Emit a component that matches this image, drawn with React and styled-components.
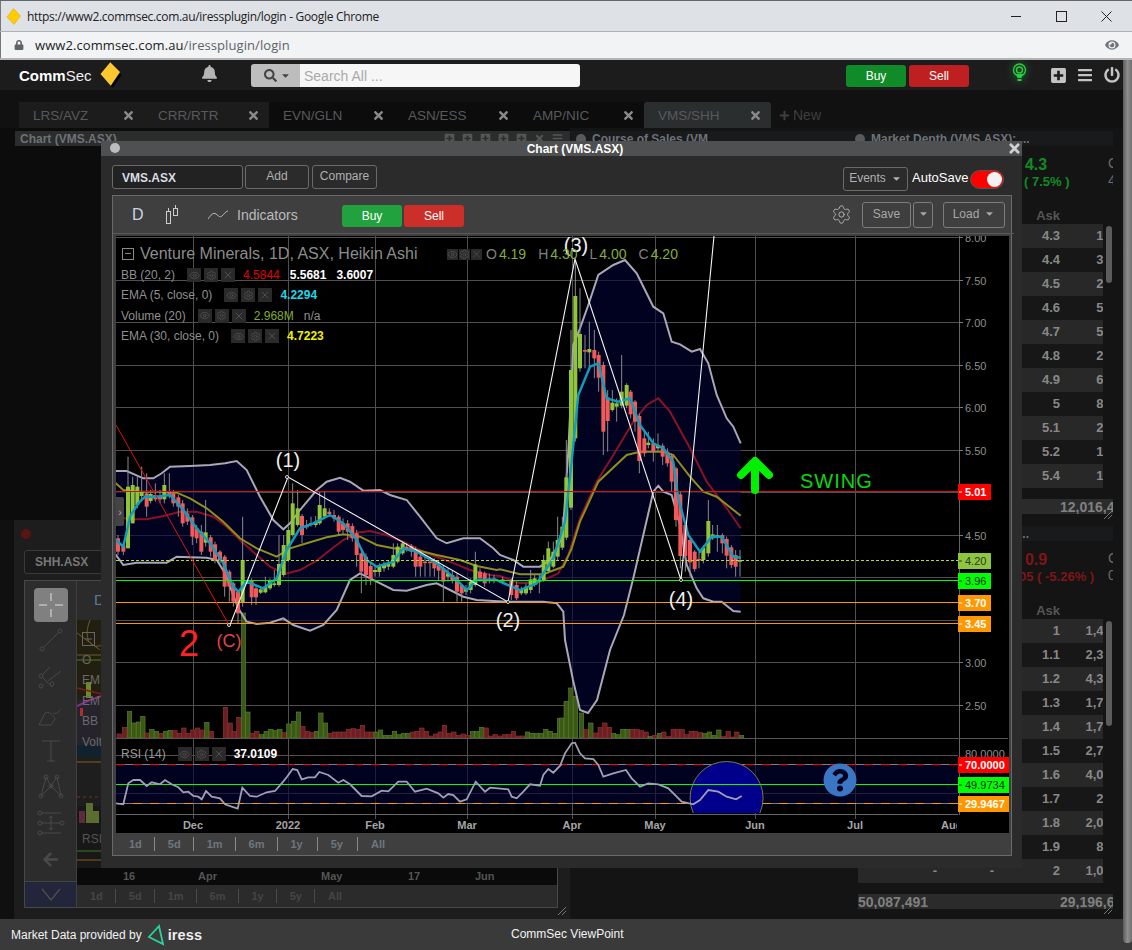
import React from 'react';
import styled, { createGlobalStyle } from 'styled-components';
import { FaBell, FaSearch, FaCaretDown, FaPlusSquare, FaBars, FaPowerOff, FaTimes, FaEye, FaPlus, FaLock, FaQuestionCircle, FaArrowLeft } from 'react-icons/fa';
import { Settings, Eye, X as XIcon } from 'lucide-react';

const Global = createGlobalStyle`
  html, body { margin: 0; padding: 0; background: #111; width: 1132px; height: 950px; overflow: hidden; }
  body, button, input { font-family: "Liberation Sans", Arial, sans-serif; }
  * { box-sizing: border-box; }
`;

const Page = styled.div`
  position: relative; width: 1132px; height: 950px; overflow: hidden;
  display: flex; flex-direction: column; background: #0e0e0e;
`;

/* ---------- browser chrome ---------- */
const TitleBar = styled.div`
  height: 32px; background: #dee1e6; border-top: 1px solid #62666a; border-bottom: 1px solid #aeb1b5;
  display: flex; align-items: center; padding-left: 6px; box-shadow: inset 1px 0 0 #777;
  color: #222; font: 12px "Open Sans", sans-serif;
`;
const TitleText = styled.span` margin-left: 6px; white-space: nowrap; letter-spacing: -.31px; `;
const WinControls = styled.div` margin-left: auto; display: flex; padding-right: 3px; `;
const WinBtn = styled.div`
  width: 45px; height: 30px; display: flex; align-items: center; justify-content: center;
`;
const AddressBar = styled.div`
  height: 28px; background: #f1f3f4; border-bottom: 2px solid #b4b4b4; box-shadow: inset 1px 0 0 #777;
  display: flex; align-items: center; padding: 0 12px 0 14px; font: 13px "Open Sans", sans-serif; color: #222;
`;
const UrlPath = styled.span` color: #5f6368; `;
const Url = styled.span` margin-left: 11px; white-space: nowrap; letter-spacing: .08px; `;
const EyeWrap = styled.div` margin-left: auto; color: #707478; display: flex; padding-right: 1px;`;

/* ---------- app header ---------- */
const AppHeader = styled.div`
  height: 30px; background: #1c1c1d; display: flex; align-items: center; position: relative;
`;
const Logo = styled.div`
  margin-left: 19px; display: flex; align-items: center; color: #fff; font-size: 15px; width: 103px;
  b { font-weight: 700; } span { color: #eee; }
  svg { margin-left: 8px; }
`;
const BellWrap = styled.div` margin-left: 79px; display: flex; color: #b5b5b5; margin-top: -4px; `;
const Search = styled.div`
  margin-left: 33px; width: 329px; height: 23px; border-radius: 3px; overflow: hidden; display: flex;
`;
const SearchAddon = styled.div`
  width: 49px; background: #bdbdbd; color: #444; display: flex; align-items: center; padding-left: 13px; gap: 3px;
`;
const SearchInput = styled.div`
  flex: 1; background: #f6f6f6; color: #aaa; font-size: 14px; line-height: 25px; padding-left: 4px;
`;
const TradeBtn = styled.div`
  width: ${p => p.$w || 60}px; height: ${p => p.$h || 22}px; border-radius: 3px; background: ${p => p.$bg};
  color: #fff; font-size: 12px; display: flex; align-items: center; justify-content: center;
`;
const BuySell = styled.div` margin-left: 266px; margin-top: 1px; display: flex; gap: 3px; `;
const HeaderIcons = styled.div`
  margin-left: 43px; display: flex; align-items: center; color: #c4c4c4;
`;
const Bulb = styled.div` display: flex; filter: drop-shadow(0 0 4px rgba(40,220,70,.55)); margin-top: -5px; `;
const HeaderIcon = styled.div` display: flex; margin-left: ${p => p.$ml}px; `;

/* ---------- tabs ---------- */
const TabRow = styled.div`
  height: 38px; background: #111; padding: 12px 0 0 19px; display: flex;
`;
const Tab = styled.div`
  width: ${p => p.$w || 125}px; height: 26px; background: ${p => p.$bg}; color: #565a5c; font-size: 13.5px;
  display: flex; align-items: center; padding: 1px 9px 0 14px; justify-content: space-between;
  border-radius: ${p => p.$active ? '3px 3px 0 0' : '0'};
  svg { color: #8a8a8a; }
`;
const NewTab = styled.div`
  margin-left: 8px; color: #3f3f3f; font-size: 14px; display: flex; align-items: center; gap: 3px; height: 26px;
`;

/* ---------- workspace ---------- */
const Workspace = styled.div` flex: 1; display: flex; min-height: 0; background: #101010; `;
const LeftCol = styled.div` width: 570px; display: flex; flex-direction: column; `;
const MidCol = styled.div` width: 280px; background: #141414; padding: 3px 0 0 1px; `;
const RightCol = styled.div` width: 273px; display: flex; flex-direction: column; background: #141414; `;

const PanelTitle = styled.div`
  height: 15px; background: ${p => p.$bg || '#191a1b'}; display: flex; align-items: center; gap: 6px; padding-left: ${p => p.$pl || 5}px;
  color: #6d7278; font-size: 12px; font-weight: 700; white-space: nowrap; overflow: hidden;
  margin-left: ${p => p.$ml || 0}px;
`;
const Dot = styled.span` width: 10px; height: 10px; border-radius: 50%; background: ${p => p.$c || '#5a5a5a'}; flex: none; `;
const TitleIcons = styled.div` margin-left: auto; display: flex; gap: 7px; padding-right: 7px; color: #555; `;

const UpperLeft = styled.div` height: 392px; background: #0c0c0c; padding: 3px 0 0 15px; `;
const LowerLeft = styled.div`
  flex: 1; margin-left: 14px; background: #1d1d1d; padding: 0 12px 0 10px; position: relative;
`;
const LowerTitle = styled.div` height: 27px; display: flex; align-items: center; margin-left: -3px; `;
const SymbolGhost = styled.div`
  width: 245px; height: 24px; margin-top: 3px; border: 1px solid #3a3a3a; border-radius: 3px; background: #1a1a1a;
  color: #777; font-size: 12px; font-weight: 700; line-height: 22px; padding-left: 10px;
`;
const GhostFrame = styled.div`
  margin-top: 6px; height: 328px; border: 1px solid #484848; display: flex; background: #2b2b2b;
`;
const ToolCol = styled.div`
  width: 52px; border-right: 1px solid #3f3f3f; background: #2c2c2c; display: flex; flex-direction: column; align-items: center; padding-top: 7px;
`;
const ToolActive = styled.div`
  width: 34px; height: 34px; border-radius: 4px; background: #808080; display: flex; align-items: center; justify-content: center;
`;
const ToolBtn = styled.div` height: 36.5px; display: flex; align-items: center; justify-content: center; color: #4a4a4a; `;
const ToolChevron = styled.div`
  margin-top: auto; width: 100%; height: 26px; background: #23253a; border-top: 1px solid #444; display: flex; align-items: center; justify-content: center;
`;
const GhostBody = styled.div` flex: 1; display: flex; flex-direction: column; min-width: 0; `;
const GhostToolbar = styled.div` height: 39px; padding-left: 17px; color: #5b7c99; font-size: 15px; line-height: 38px; `;
const GhostPlot = styled.svg` display: block; flex: none; `;
const GhostAxis = styled.div`
  height: 17px; background: #0a0a0a; position: relative; color: #555; font-size: 11px; font-weight: 700; line-height: 17px;
`;
const AxisTick = styled.span` position: absolute; left: ${p => p.$x}px; `;
const GhostRange = styled.div`
  flex: 1; display: flex; align-items: center; padding-left: 0; color: #454545; font-size: 11px; font-weight: 700;
`;
const GhostRangeBtn = styled.span`
  padding: 0 12px 0 13px; height: 14px; line-height: 14px; border-right: ${p => p.$last ? 'none' : '1px solid #4a4a4a'};
`;
const Grip = styled.svg` position: absolute; right: ${p => p.$r}px; bottom: ${p => p.$b}px; `;

/* right depth panels */
const Depth = styled.div`
  height: 395px; position: relative; padding-top: 3px; overflow: hidden;
  width: 263px;
`;
const QuoteRow = styled.div` margin-top: 9px; height: 34px; position: relative; display: flex; padding-left: 151px; width: 263px; overflow: hidden; `;
const QuoteBlock = styled.div`
  width: 70px; display: flex; flex-direction: column; align-items: center; color: ${p => p.$c}; white-space: nowrap; flex: none;
  strong { font-size: 16px; line-height: 20px; } span { font-size: 13px; font-weight: 700; line-height: 14px; margin-left: ${p => p.$ox || 0}px; }
`;
const QuoteSide = styled.div`
  margin-left: 37px; color: #6a6a6a; font-size: 14px; display: flex; flex-direction: column; line-height: 17px; flex: none;
`;
const AskHead = styled.div`
  margin-top: 19px; height: 16px; color: #555; font-size: 13px; font-weight: 700; padding-left: 8px; width: 255px; margin-left: 0;
  display: grid; grid-template-columns: 84px 57px 66px; line-height: 15px;
  span:nth-child(3) { text-align: right; padding-right: 5px; }
`;
const Row = styled.div`
  height: 24px; width: 245px; margin-left: 8px; background: ${p => p.$odd ? '#282828' : '#171717'}; overflow: hidden;
  display: grid; grid-template-columns: 84px 57px 66px 58px; color: #888; font-size: 13px; font-weight: 700; line-height: 24px;
  span { text-align: right; padding-right: 5px; white-space: nowrap; }
`;
const TotalRow = styled.div`
  margin-top: 11px; margin-left: 8px; width: 255px; height: 15px; background: #2b2b2b; overflow: hidden; color: #808080; font-size: 14px; font-weight: 700;
  display: flex; line-height: 16px; white-space: nowrap;
  span:first-child { width: 202px; flex: none; }
`;
const Thumb = styled.div`
  position: absolute; left: 256px; top: 98px; width: 6px; height: ${p => p.$h}px; border-radius: 3px; background: #5c5c5c;
`;

/* page scrollbar */
const PageScroll = styled.div`
  position: absolute; right: 0; top: 60px; width: 9px; height: 883px;
  background: linear-gradient(90deg, #5b5b5b, #8d8d8d 50%, #6f6f6f); border-radius: 0 0 4px 4px;
`;

/* footer */
const Footer = styled.div`
  height: 31px; background: #3a3a3a; color: #f2f2f2; font-size: 12px; display: flex; align-items: center; padding-left: 11px; position: relative;
`;
const Iress = styled.b` font-size: 14.5px; color: #eee; margin-left: 1px; letter-spacing: .1px; `;
const IressMark = styled.svg` display: block; margin-left: 5px; flex: none; `;
const FootRight = styled.span` margin-top: -2px; `;
const FootLeft = styled.div` display: flex; align-items: center; width: 500px; `;

/* ---------- floating chart window ---------- */
const ChartWindow = styled.div`
  position: absolute; left: 101px; top: 141px; width: 921px; height: 727px; background: #2b2b2b;
  display: flex; flex-direction: column;
`;
const WinHead = styled.div`
  height: 15px; background: #4f5051; display: flex; align-items: center; justify-content: center; position: relative; padding-left: 27px;
  color: #fff; font-size: 12px; font-weight: 700; flex: none;
`;
const WinDot = styled.span`
  position: absolute; left: 9px; top: 2px; width: 10px; height: 10px; border-radius: 50%; background: #bdbdbd;
`;
const WinClose = styled.span` position: absolute; right: 0; top: 0; color: #d0d0d0; display: flex; `;
const SymbolRow = styled.div`
  height: 30px; margin-top: 9px; padding: 0 18px 0 11px; display: flex; gap: 2px; flex: none;
`;
const SymbolInput = styled.div`
  width: 131px; height: 24px; border: 1px solid #6a6a6a; border-radius: 3px; background: #222; color: #d8dde2; font-size: 12px; font-weight: 700;
  line-height: 24px; padding-left: 9px;
`;
const GhostBtn = styled.div`
  height: ${p => p.$h || 24}px; width: ${p => p.$w}px; border: 1px solid ${p => p.$bc || '#6a6a6a'}; border-radius: 3px; color: ${p => p.$c || '#b0b0b0'}; font-size: 12px;
  display: flex; align-items: center; justify-content: center; gap: 5px; flex: none; margin-left: ${p => p.$ml || 0}px; margin-top: ${p => p.$mt || 0}px;
  padding-bottom: 2px;
`;
const Spacer = styled.div` flex: 1; `;
const GapBox = styled.span` width: ${p => p.$w}px; flex: none; `;
const AutoSave = styled.div`
  margin-left: 2px; margin-top: 4px; color: #fff; font-size: 13px; line-height: 18px; width: 55px; white-space: nowrap;
`;
const Toggle = styled.div`
  margin-left: 1px; margin-top: 5px; width: 34px; height: 19px; border-radius: 10px; background: #f00; border: 1px solid #555; position: relative;
  &::after { content: ''; position: absolute; right: 1px; top: 1px; width: 15px; height: 15px; border-radius: 50%; background: #f2f2f2; }
`;
const ChartFrame = styled.div`
  margin: 0 10px 0 11px; width: 900px; height: 661px; border: 1px solid #6a6a6a; background: #3f3f3f; display: flex; flex-direction: column; padding-left: 3px; flex: none;
`;
const Toolbar = styled.div`
  height: 38px; display: flex; align-items: center; flex: none; border-bottom: 1px solid #5a5a5a; margin-right: -3px; margin-left: -3px; padding-left: 19px;
`;
const Dee = styled.span` color: #c9d6e2; font-size: 16px; margin-right: 22px; width: 11px; `;
const IndLabel = styled.span` color: #bbb; font-size: 14px; margin-left: 9px; width: 61px; `;
const ToolbarTrade = styled.div` display: flex; gap: 2px; margin-left: 44px; margin-top: 2px; `;
const GearWrap = styled.div` display: flex; color: #bbb; margin-right: 10px; `;
const PlotWrap = styled.div` position: relative; flex: none; width: 893px; height: 597px; background: #000; margin-top: 2px; overflow: hidden;`;
const PlotSvg = styled.svg` display: block; position: absolute; left: 0; top: 0; `;
const RangeBar = styled.div`
  flex: 1; display: flex; align-items: center; color: #6e7680; font-size: 11px; font-weight: 700;
`;
const RangeBtn = styled.span`
  height: 14px; line-height: 14px; padding: ${p => p.$pad || '0 12px 0 13px'}; border-right: ${p => p.$last ? 'none' : '1px solid #8a8a8a'};
`;

/* legend */
const Legend = styled.div`
  position: absolute; left: 5px; top: 10px; display: flex; flex-direction: column; color: #8f8f8f;
`;
const LegendTitle = styled.div` display: flex; align-items: center; height: 16px; margin-bottom: 3px; white-space: nowrap; `;
const MinusBox = styled.span`
  width: 12px; height: 12px; border: 1px solid #8a8a8a; position: relative; flex: none; margin-left: 1px;
  &::after { content: ''; position: absolute; left: 2px; right: 2px; top: 4px; height: 1px; background: #8a8a8a; }
`;
const TitleName = styled.span` font-size: 16px; margin-left: 6px; color: #8c8c8c; width: 307px; `;
const OHLC = styled.span` display: flex; gap: 2px; font-size: 14px; margin-right: 12px; color: #808080; i { font-style: normal; color: #85ad3a; } `;
const LegendRow = styled.div`
  display: flex; align-items: center; height: 20.3px; font-size: 12px; white-space: nowrap;
`;
const IconGroup = styled.span` display: flex; gap: ${p => p.$g ?? 3}px; margin: 0 ${p => p.$mr ?? 8}px 0 ${p => p.$ml ?? 12}px; `;
const IconBox = styled.span`
  width: ${p => p.$s || 14}px; height: ${p => p.$s || 14}px; background: #2a2a2a; color: #4e4e4e; display: flex; align-items: center; justify-content: center;
`;
const Val = styled.span` color: ${p => p.$c}; margin-right: ${p => p.$mr ?? 10}px; font-weight: ${p => p.$w || 700}; `;
const RsiLegend = styled(LegendRow)` position: absolute; left: 5px; top: 508px; color: #9a9a9a; `;
const Handle = styled.div`
  position: absolute; left: 0; top: 261px; width: 8px; height: 29px; background: #444; color: #aaa; font-size: 11px; display: flex; align-items: center; justify-content: center; border-radius: 0 2px 2px 0;
`;
const HelpBadge = styled.div` position: absolute; left: 707px; top: 527px; display: flex; color: #3a76c4; `;

/* ---------- chart data ---------- */
const pts4 = a => a.map(([x, y]) => [110 + x / 3, 440 + y / 3]);
const pts5 = a => a.map(([x, y]) => [500 + x / 3, 235 + y / 3]);
const str = a => a.map(p => p[0].toFixed(1) + ',' + p[1].toFixed(1)).join(' ');

const bbUp = [...pts4([[0,93],[18,93],[50,93],[100,115],[130,115],[155,100],[180,80],[240,78],[300,75],[345,70],[380,63],[410,90],[450,170],[490,240],[520,268],[540,250],[570,210],[620,150],[650,125],[690,113],[720,125],[760,152],[810,150],[840,165],[890,180],[930,230],[980,295],[1010,310],[1060,295],[1110,295],[1150,325]]),
  ...pts5([[0,960],[40,975],[70,995],[120,995],[150,975],[180,920],[190,870],[205,650],[220,330],[240,280],[265,210],[295,120],[340,90],[375,75],[410,115],[460,215],[490,235],[515,320],[540,328],[575,350],[600,342],[625,385],[650,480],[680,550],[700,575],[722,625]])];
const bbLow = [...pts4([[0,345],[18,345],[40,375],[80,368],[130,368],[170,368],[200,350],[240,352],[290,353],[320,360],[345,400],[385,505],[410,545],[440,552],[480,548],[520,535],[550,555],[600,572],[640,555],[680,510],[720,420],[750,400],[800,425],[850,450],[890,452],[950,435],[980,430],[1020,450],[1060,470],[1100,480],[1190,485]]),
  ...pts5([[60,1100],[130,1100],[170,1105],[190,1130]]),
  [565,640],[573,680],[580,710],[588,713],[597,700],[610,650],[624,615],
  ...pts5([[400,1030],[430,900],[460,770],[475,752],[490,770],[515,780],[540,870],[560,990],[590,1060],[610,1090],[640,1100],[665,1100],[700,1128],[722,1130]])];
const olive = [...pts4([[0,125],[18,130],[40,150],[90,155],[150,155],[200,158],[240,175],[290,205],[340,245],[390,295],[440,325],[500,350],[540,325],[590,310],[650,292],[700,283],[750,290],[800,315],[850,325],[920,330],[980,345],[1050,360],[1100,378],[1160,390]]),
  ...pts5([[0,1003],[60,1018],[130,1018],[190,995],[215,940],[240,860],[295,740],[380,660],[420,650],[490,650],[520,660],[570,725],[610,770],[650,785],[722,842]])];
const maroon = [...pts4([[18,230],[60,238],[110,238],[160,228],[210,215],[260,215],[310,230],[350,260],[390,300],[440,345],[480,380],[525,402],[570,390],[620,362],[660,330],[700,300],[740,278],[780,273],[830,285],[880,305],[950,340],[1020,365],[1080,390],[1140,405]]),
  ...pts5([[0,1023],[60,1045],[120,1040],[175,1015],[205,960],[240,850],[290,740],[340,660],[400,560],[440,510],[475,490],[510,530],[570,640],[620,740],[680,820],[722,880]])];
const teal = [...pts4([[18,300],[40,320],[60,230],[85,190],[105,170],[140,170],[180,165],[220,210],[260,265],[300,310],[340,370],[370,440],[385,455],[410,425],[460,445],[500,415],[530,330],[570,265],[610,250],[660,225],[700,250],[740,300],[770,360],[800,380],[850,365],[880,325],[920,335],[980,370],[1040,420],[1070,450],[1100,420],[1160,420]]),
  ...pts5([[0,1040],[60,1065],[110,1045],[160,970],[195,860],[215,680],[235,480],[270,395],[295,385],[320,490],[355,500],[390,490],[420,570],[460,625],[490,640],[520,680],[535,790],[565,900],[600,950],[635,905],[665,905],[700,965],[722,968]])];

// x, bodyTop, bodyBottom, up(1)/down(0), wickTop, wickBottom
const c4 = [[24,295,335,0,285,345],[40,315,335,0,305,345],[54,140,325,1,50,325],[68,135,250,1,110,250],[82,140,195,1,110,205],[95,153,168,1,80,180],[110,160,200,0,100,230],[122,162,183,1,150,190],[136,165,178,0,130,185],[150,168,178,0,150,190],[163,135,178,1,100,190],[178,155,165,0,100,175],[190,160,190,0,150,200],[205,172,200,0,165,230],[218,190,250,0,180,260],[232,220,245,0,205,255],[247,232,290,0,225,315],[260,265,295,0,255,310],[274,275,335,0,255,345],[287,277,308,1,180,320],[302,292,335,0,285,350],[315,313,360,0,305,370],[330,335,360,0,330,370],[344,350,440,0,345,470],[358,395,440,0,390,485],[370,430,485,0,425,500],[384,455,520,0,450,550],[398,360,487,1,230,500],[425,420,472,0,415,495],[438,445,472,0,435,495],[452,448,458,1,440,462],[466,440,457,1,410,460],[480,420,445,1,415,450],[493,430,435,1,390,440],[507,372,435,1,285,440],[521,315,405,1,285,410],[535,270,360,1,260,365],[548,190,285,1,130,290],[563,205,255,1,150,260],[576,228,285,0,222,310],[590,257,262,0,240,268],[603,250,255,1,230,260],[617,245,255,1,228,262],[629,195,250,1,155,255],[644,205,230,1,155,235],[658,215,222,0,205,230],[672,225,235,0,210,245],[686,230,275,0,225,285],[699,250,270,0,235,280],[713,250,275,0,240,300],[727,258,295,0,250,305],[740,280,345,0,270,380],[754,340,395,0,325,460],[768,350,405,0,340,435],[782,378,418,0,365,435],[795,390,396,1,375,410],[808,378,396,1,370,410],[822,375,385,1,365,395],[835,370,380,1,360,390],[850,345,380,1,310,385],[863,320,365,1,310,370],[878,310,340,1,305,345],[890,320,325,0,310,335],[904,318,335,0,312,350],[917,330,380,0,320,410],[931,350,380,0,335,410],[945,365,368,0,345,410],[960,365,368,0,350,410],[973,365,385,0,355,410],[986,375,392,0,360,420],[1000,385,425,0,375,485],[1014,400,410,1,385,425],[1027,405,420,0,390,430],[1041,410,455,0,400,485],[1055,435,460,0,430,485],[1068,445,455,1,435,465],[1082,425,450,1,415,460],[1096,373,435,1,335,440],[1110,395,415,0,385,425],[1124,400,430,0,395,440],[1138,415,420,0,400,430],[1152,415,420,0,405,430]];
const c5 = [[8,1033,1040,0,1025,1048],[34,1035,1080,0,1030,1095],[50,1050,1090,0,1040,1095],[64,1062,1075,1,1055,1080],[78,1055,1075,1,1045,1080],[92,1033,1065,1,1005,1075],[104,1030,1050,1,1020,1055],[118,1035,1040,1,1020,1075],[131,975,1035,1,960,1040],[145,940,1008,1,920,1015],[160,950,995,1,920,1000],[173,915,965,1,845,975],[187,875,938,1,845,945],[199,727,908,1,615,915],[213,405,818,1,285,825],[226,183,610,1,75,620],[240,297,400,1,160,410],[255,345,350,0,300,400],[268,342,352,1,260,400],[283,345,370,0,285,430],[296,360,428,0,350,470],[310,390,590,0,380,660],[323,487,558,0,465,650],[337,503,525,1,465,530],[350,505,515,1,490,560],[365,470,512,1,360,520],[380,450,512,1,445,520],[392,470,538,0,465,550],[405,500,560,0,495,590],[418,543,678,0,535,715],[433,610,655,0,590,665],[445,623,630,1,590,640],[460,625,650,0,610,680],[474,630,640,1,595,650],[488,632,665,0,625,690],[502,650,685,0,640,695],[515,662,740,0,655,770],[528,700,855,0,695,875],[541,778,963,0,770,1000],[556,870,963,0,865,1010],[570,915,982,0,905,1025],[584,950,1002,0,945,1010],[597,972,976,0,950,1000],[610,938,975,1,930,985],[625,858,955,1,795,965],[638,898,910,1,870,915],[652,900,908,1,870,950],[667,900,925,0,895,955],[680,912,962,0,905,1000],[694,937,990,0,930,1000],[707,960,995,0,945,1025],[720,975,980,1,945,1025]];
const candles = [
  ...c4.map(([x, t, b, u, wt, wb]) => ({ x: 110 + x / 3, t: 440 + t / 3, b: 440 + b / 3, u, wt: 440 + wt / 3, wb: 440 + wb / 3 })),
  ...c5.map(([x, t, b, u, wt, wb]) => ({ x: 500 + x / 3, t: 235 + t / 3, b: 235 + b / 3, u, wt: 235 + wt / 3, wb: 235 + wb / 3 })),
];

const vol6 = [[27,12,0],[43,32,0],[58,80,1],[71,45,1],[85,48,1],[98,65,1],[111,15,0],[125,26,1],[139,20,1],[153,14,0],[167,20,1],[180,23,1],[194,22,0],[208,14,0],[221,30,0],[234,14,0],[248,24,0],[262,30,0],[276,24,0],[290,47,1],[304,20,0],[346,92,0],[360,45,0],[372,20,0],[386,62,0],[400,375,1],[413,78,1],[426,14,0],[440,20,0],[454,10,1],[468,20,1],[482,26,1],[496,22,1],[509,26,1],[523,16,0],[536,42,1],[550,50,1],[565,78,1],[578,35,0],[592,20,0],[606,16,0],[620,20,1],[632,75,1],[646,45,1],[660,14,0],[673,18,0],[687,18,0],[701,18,0],[715,26,0],[729,28,0],[743,26,0],[757,38,0],[770,18,0],[784,18,0],[798,18,1],[811,24,1],[825,8,1],[839,8,1],[853,20,1],[866,10,1],[880,14,1],[894,14,1],[908,18,0],[921,20,0],[935,30,0],[949,20,0],[963,6,0],[976,12,0],[990,18,0],[1003,38,0],[1017,14,0],[1031,18,0],[1045,8,0],[1059,12,0],[1073,8,0],[1087,20,1],[1100,20,1],[1114,32,1],[1128,30,0],[1142,6,0],[1155,10,0],[1169,6,0],[1183,10,0],[1197,10,0],[1210,20,0],[1224,6,0],[1238,6,0],[1252,18,1],[1265,14,1],[1279,14,1],[1293,14,1],[1307,26,1],[1320,20,1],[1334,14,1],[1348,58,1]];
const vol7 = [[4,60,1],[18,110,1],[32,150,1],[46,125,1],[64,75,1],[78,25,0],[92,45,1],[106,15,0],[120,32,0],[134,45,0],[148,32,0],[160,14,1],[174,10,1],[188,26,1],[202,26,1],[216,26,0],[230,26,0],[244,22,0],[258,18,0],[270,5,1],[284,8,0],[298,14,1],[311,18,0],[325,4,0],[339,26,0],[352,26,0],[366,26,0],[380,10,0],[393,20,0],[406,20,0],[420,16,0],[434,14,1],[448,18,1],[462,8,1],[476,24,1],[490,4,0],[504,20,0],[518,3,0],[530,18,0],[544,8,1]];
const volumes = [
  ...vol6.map(([x, h, u]) => ({ x: 110 + x / 3, h: h / 3, u })),
  ...vol7.map(([x, h, u]) => ({ x: 560 + x / 3, h: h / 3, u })),
];

const rsi = [...[[18,340],[40,343],[55,280],[70,270],[90,270],[110,288],[125,277],[150,283],[165,270],[185,283],[205,292],[220,307],[235,305],[250,318],[265,320],[275,328],[288,303],[305,320],[330,325],[345,343],[365,350],[383,356],[397,293],[420,318],[440,320],[470,307],[495,303],[515,280],[530,262],[548,237],[562,240],[575,268],[595,262],[615,262],[628,246],[655,255],[685,278],[700,270],[720,283],[755,318],[785,319],[815,302],[835,304],[865,275],[890,275],[915,305],[950,296],[985,310],[1000,323],[1015,312],[1030,315],[1050,335],[1070,328],[1097,275],[1125,305],[1140,293],[1195,298],[1205,320],[1220,325],[1240,305],[1260,283],[1290,287],[1300,255],[1315,237],[1330,248],[1355,222]].map(([x, y]) => [110 + x / 3, 690 + y / 3]),
  ...[[0,228],[15,190],[35,160],[45,158],[60,190],[75,205],[100,207],[115,225],[130,260],[160,250],[198,240],[215,265],[240,290],[265,280],[295,283],[325,295],[365,335],[400,343],[420,330],[445,300],[475,305],[500,320],[528,328],[545,318]].map(([x, y]) => [560 + x / 3, 690 + y / 3])];

const gridX = [193, 288, 375, 467, 572, 655, 755, 855];
const prices = ['8.00', '7.50', '7.00', '6.50', '6.00', '5.50', '4.50', '3.00', '2.50'];
const gridP = [8, 7.5, 7, 6.5, 6, 5.5, 5, 4.5, 4, 3.5, 3, 2.5];
const py = p => Math.round(237 + (8 - p) * 85) + .5;
const dates = [['Dec', 193], ['2022', 288], ['Feb', 375], ['Mar', 467], ['Apr', 572], ['May', 655], ['Jun', 755], ['Jul', 855]];
const waves = '230,625 288,477 508,602 575,259 681,580 714,236';

const tags = [
  { y: 484, bg: '#ff0000', c: '#fff', t: '5.01' },
  { y: 553, bg: '#8dc63f', c: '#333', t: '4.20', n: 1 },
  { y: 573, bg: '#00ff00', c: '#222', t: '3.96', n: 1 },
  { y: 595, bg: '#ff9800', c: '#fff', t: '3.70' },
  { y: 616, bg: '#ff9800', c: '#fff', t: '3.45' },
];
const rsiTags = [
  { y: 757, bg: '#ff0000', c: '#fff', t: '70.0000' },
  { y: 777, bg: '#00ff00', c: '#222', t: '49.9734', n: 1 },
  { y: 796, bg: '#ff9800', c: '#fff', t: '29.9467' },
];

const ChartDrawing = () => (
  <PlotSvg width="893" height="597" viewBox="116 236 893 597" fontFamily="'Liberation Sans', Arial, sans-serif">
    <defs>
      <clipPath id="rsiClip"><rect x="116" y="740" width="842" height="73" /></clipPath>
      <clipPath id="axisClip"><rect x="116" y="815" width="841" height="18" /></clipPath>
    </defs>
    {gridP.map(p => <line key={p} x1="116" x2="961" y1={py(p)} y2={py(p)} stroke="#505050" />)}
    {gridX.map(x => <line key={x} x1={x + .5} x2={x + .5} y1="236" y2="819" stroke="#505050" />)}
    {[755, 793, 814].map(y => <line key={y} x1="116" x2="958" y1={y + .5} y2={y + .5} stroke="#505050" />)}
    <line x1="959.5" x2="959.5" y1="236" y2="815" stroke="#666" />
    <polygon points={str(bbUp) + ' ' + str([...bbLow].reverse())} fill="rgba(2,2,52,.62)" />

    {volumes.map((v, i) => (
      <rect key={i} x={v.x - 2} y={738 - v.h} width="4.4" height={v.h} fill={v.u ? '#3b5916' : '#6a2022'} stroke={v.u ? '#5f8428' : '#9a3232'} strokeWidth=".6" />
    ))}
    <line x1="116" x2="1008" y1="738.5" y2="738.5" stroke="#555" />

    <polyline points={str(bbUp)} fill="none" stroke="#a9a7b8" strokeWidth="2" />
    <polyline points={str(bbLow)} fill="none" stroke="#a9a7b8" strokeWidth="2" />
    <polyline points={str(maroon)} fill="none" stroke="#8a1224" strokeWidth="2" />
    <polyline points={str(olive)} fill="none" stroke="#8f8f1c" strokeWidth="2" />

    {candles.map((c, i) => (
      <g key={i}>
        <line x1={c.x} x2={c.x} y1={c.wt} y2={c.wb} stroke="#8a8a8a" />
        <rect x={c.x - 2} y={c.t} width="4" height={Math.max(c.b - c.t, 1.5)} fill={c.u ? '#8fc43c' : '#f05a5a'} />
      </g>
    ))}
    <polyline points={str(teal)} fill="none" stroke="#0f9ebb" strokeWidth="2.4" />

    <line x1="116" x2="958" y1="491.5" y2="491.5" stroke="#d81010" />
    <line x1="116" x2="958" y1="560.5" y2="560.5" stroke="#b4e01e" strokeDasharray="3 2" />
    <line x1="116" x2="958" y1="580.5" y2="580.5" stroke="#0f0" />
    <line x1="116" x2="958" y1="602.5" y2="602.5" stroke="#ff9800" />
    <line x1="116" x2="958" y1="623.5" y2="623.5" stroke="#ff9800" />

    <polyline points="116,425 229,625" fill="none" stroke="#e01010" />
    <polyline points={waves} fill="none" stroke="#f4f4f4" strokeWidth="1.1" />
    {[[229, 625], [287, 477], [508, 602], [681, 580]].map(([x, y]) => <circle key={x} cx={x} cy={y} r="1.5" fill="#000" stroke="#ddd" />)}

    <text x="288" y="467" fontSize="20" fill="#eee" textAnchor="middle">(1)</text>
    <text x="508" y="627" fontSize="20" fill="#eee" textAnchor="middle">(2)</text>
    <text x="576" y="252" fontSize="20" fill="#eee" textAnchor="middle">(3)</text>
    <text x="681" y="606" fontSize="20" fill="#eee" textAnchor="middle">(4)</text>
    <text x="229" y="647" fontSize="18" fill="#e04545" textAnchor="middle">(C)</text>
    <text x="179" y="656" fontSize="36" fill="#f22">2</text>
    <text x="800" y="488" fontSize="20" fill="#0ad60f" letterSpacing="1">SWING</text>
    <path d="M755 490 L755 462 M741 475 L755 461 L769 475" fill="none" stroke="#00f000" strokeWidth="8" strokeLinejoin="round" strokeLinecap="round" />

    <rect x="116" y="764" width="842" height="39" fill="rgba(2,2,52,.62)" />
    <line x1="116" x2="958" y1="764.5" y2="764.5" stroke="#7c7c8c" />
    <line x1="116" x2="958" y1="764.5" y2="764.5" stroke="#f00" strokeDasharray="9 8" />
    <line x1="116" x2="958" y1="803.5" y2="803.5" stroke="#7c7c8c" />
    <line x1="116" x2="958" y1="803.5" y2="803.5" stroke="#ff9800" strokeDasharray="9 8" />
    <g clipPath="url(#rsiClip)">
      <circle cx="726.6" cy="798" r="36.5" fill="#00008b" stroke="#7d7a3c" />
    </g>
    <line x1="116" x2="958" y1="784.5" y2="784.5" stroke="#0f0" />
    <polyline points={str(rsi)} fill="none" stroke="#a0a0b4" strokeWidth="1.8" />
    <line x1="116" x2="958" y1="814.5" y2="814.5" stroke="#666" />

    {prices.map(p => <text key={p} x="965" y={py(+p) + 4} fontSize="11" fill="#8e8e8e">{p}</text>)}
    {[8, 7.5, 7, 6.5, 6, 5.5, 4.5, 3, 2.5].map(p => <line key={p} x1="959" x2="963" y1={py(p)} y2={py(p)} stroke="#777" />)}
    <text x="965" y="758" fontSize="11" fill="#8e8e8e">80.0000</text>
    {[...tags, ...rsiTags].map(t => (
      <g key={t.t}>
        <rect x="958" y={t.y} width={t.t.length > 4 ? 51 : 33} height="16" fill={t.bg} />
        <line x1="959" x2="962" y1={t.y + 8} y2={t.y + 8} stroke={t.n ? '#333' : '#fff'} />
        <text x="965" y={t.y + 12} fontSize="11" fontWeight={t.n ? 400 : 700} fill={t.c}>{t.t}</text>
      </g>
    ))}

    {dates.map(([d, x]) => <text key={d} x={x} y="829" fontSize="11" fontWeight="700" fill="#a6a6a6" textAnchor="middle">{d}</text>)}
    <g clipPath="url(#axisClip)"><text x="941" y="829" fontSize="11" fontWeight="700" fill="#a6a6a6">Aug</text></g>
  </PlotSvg>
);

const MiniIcons = ({ s, g, ml, mr }) => (
  <IconGroup $g={g} $ml={ml} $mr={mr}>
    <IconBox $s={s}><Eye size={11} /></IconBox>
    <IconBox $s={s}><Settings size={11} /></IconBox>
    <IconBox $s={s}><XIcon size={12} /></IconBox>
  </IconGroup>
);

const Depths = [
  { title: 'Market Depth (VMS.ASX): ...', price: '4.3', chg: '0.3 ( 7.5% )', c: '#0f8c24', side: ['C', '4'], total: ['14,210,882', '12,016,434'], thumb: 57, ox: 0,
    rows: [['4.3', '123'], ['4.4', '345'], ['4.5', '212'], ['4.6', '545'], ['4.7', '512'], ['4.8', '234'], ['4.9', '612'], ['5', '800'], ['5.1', '212'], ['5.2', '123'], ['5.4', '100']] },
  { title: 'Market Depth (SHH.ASX): ...', price: '0.9', chg: '-0.05 ( -5.26% )', c: '#7d1616', side: ['C', '0'], total: ['50,087,491', '29,196,612'], thumb: 105, ox: 26,
    rows: [['1', '1,434'], ['1.1', '2,345'], ['1.2', '4,345'], ['1.3', '1,734'], ['1.4', '1,722'], ['1.5', '2,789'], ['1.6', '4,045'], ['1.7', '212'], ['1.8', '2,012'], ['1.9', '845'], ['2', '1,056']] },
];

const GripMark = ({ r, b }) => (
  <Grip $r={r} $b={b} width="10" height="10" viewBox="0 0 10 10"><path d="M1 9 L9 1 M5 9 L9 5" stroke="#777" strokeWidth="1" /></Grip>
);

const ToolIcon = ({ children }) => (
  <ToolBtn><svg width="28" height="28" viewBox="0 0 28 28" fill="none" stroke="#484848" strokeWidth="1">{children}</svg></ToolBtn>
);

export default function App() {
  return (
    <Page>
      <Global />
      <TitleBar>
        <svg width="15" height="17" viewBox="0 0 15 17"><polygon points="7.5,0.5 14.5,8 8,16.5 1,9" fill="#ffcc00" stroke="#e0a800" strokeWidth=".5" /></svg>
        <TitleText>https://www2.commsec.com.au/iressplugin/login - Google Chrome</TitleText>
        <WinControls>
          <WinBtn><svg width="11" height="11" viewBox="0 0 11 11"><line x1="0" x2="10" y1="5.5" y2="5.5" stroke="#222" /></svg></WinBtn>
          <WinBtn><svg width="11" height="11" viewBox="0 0 11 11"><rect x=".5" y=".5" width="10" height="10" fill="none" stroke="#222" /></svg></WinBtn>
          <WinBtn><svg width="11" height="11" viewBox="0 0 11 11"><path d="M.5 .5 L10.5 10.5 M10.5 .5 L.5 10.5" stroke="#222" /></svg></WinBtn>
        </WinControls>
      </TitleBar>
      <AddressBar>
        <FaLock size={10} color="#5f6368" />
        <Url>www2.commsec.com.au<UrlPath>/iressplugin/login</UrlPath></Url>
        <EyeWrap><FaEye size={14} /></EyeWrap>
      </AddressBar>

      <AppHeader>
        <Logo>
          <b>Comm</b><span>Sec</span>
          <svg width="23" height="26" viewBox="0 0 23 26"><polygon points="12,3 22,13 13,26 4,15" fill="#000" /><polygon points="10.5,0 20.5,10 11,24 0.5,12" fill="#fdc82f" /></svg>
        </Logo>
        <BellWrap><FaBell size={17} /></BellWrap>
        <Search>
          <SearchAddon><FaSearch size={13} /><FaCaretDown size={11} /></SearchAddon>
          <SearchInput>Search All ...</SearchInput>
        </Search>
        <BuySell>
          <TradeBtn $bg="#0f8c28">Buy</TradeBtn>
          <TradeBtn $bg="#be2021">Sell</TradeBtn>
        </BuySell>
        <HeaderIcons>
          <Bulb>
            <svg width="15" height="19" viewBox="0 0 15 19" fill="none" stroke="#27cc40" strokeWidth="1.4">
              <circle cx="7.5" cy="7" r="6" /><circle cx="7.5" cy="7" r="3" />
              <path d="M4 11 L5.5 15 H9.5 L11 11 Z M5.5 16 H9.5 V18 H5.5Z" fill="#27cc40" stroke="none" />
            </svg>
          </Bulb>
          <HeaderIcon $ml={23}><FaPlusSquare size={17} /></HeaderIcon>
          <HeaderIcon $ml={10}><FaBars size={16} /></HeaderIcon>
          <HeaderIcon $ml={11}><FaPowerOff size={16} /></HeaderIcon>
        </HeaderIcons>
      </AppHeader>

      <TabRow>
        <Tab $bg="#1c1c1c">LRS/AVZ<FaTimes size={13} /></Tab>
        <Tab $bg="#1c1c1c">CRR/RTR<FaTimes size={13} /></Tab>
        <Tab $bg="#0c0c0c">EVN/GLN<FaTimes size={13} /></Tab>
        <Tab $bg="#0c0c0c">ASN/ESS<FaTimes size={13} /></Tab>
        <Tab $bg="#0c0c0c">AMP/NIC<FaTimes size={13} /></Tab>
        <Tab $bg="#2b2e2f" $active $w={127}>VMS/SHH<FaTimes size={13} /></Tab>
        <NewTab><FaPlus size={11} />New</NewTab>
      </TabRow>

      <Workspace>
        <LeftCol>
          <UpperLeft>
            <PanelTitle $bg="#2b2c2c">Chart (VMS.ASX)
              <TitleIcons><FaPlusSquare size={11} /><FaPlusSquare size={11} /><FaPlusSquare size={11} /><FaPlusSquare size={11} /><FaPlusSquare size={11} /><FaTimes size={11} /><FaBars size={11} /></TitleIcons>
            </PanelTitle>
          </UpperLeft>
          <LowerLeft>
            <LowerTitle><Dot $c="#5a1414" /></LowerTitle>
            <SymbolGhost>SHH.ASX</SymbolGhost>
            <GhostFrame>
              <ToolCol>
                <ToolActive>
                  <svg width="24" height="24" viewBox="0 0 24 24" stroke="#ddd" strokeWidth="1"><path d="M12 0 V8 M12 16 V24 M0 12 H8 M16 12 H24" /></svg>
                </ToolActive>
                <ToolIcon><line x1="6" y1="22" x2="22" y2="6" /><circle cx="5" cy="23" r="2" /><circle cx="23" cy="5" r="2" /></ToolIcon>
                <ToolIcon><path d="M5 12 L13 4 M5 14 L15 24 M11 18 L24 8" /><circle cx="4" cy="13" r="2" /><circle cx="4" cy="23" r="2" /><circle cx="15" cy="21" r="2" /></ToolIcon>
                <ToolIcon><path d="M2 26 L8 14 C12 12 16 16 18 20 L14 26 Z M16 14 C20 16 22 12 24 10" /></ToolIcon>
                <ToolIcon><path d="M5 5 H23 M14 5 V25 M10 25 H18" /></ToolIcon>
                <ToolIcon><path d="M4 24 L9 5 L14 14 L20 5 L24 24 L14 14 Z" /><circle cx="4" cy="24" r="2" /><circle cx="9" cy="5" r="2" /><circle cx="20" cy="5" r="2" /><circle cx="24" cy="24" r="2" /><circle cx="14" cy="14" r="2" /></ToolIcon>
                <ToolIcon><path d="M4 4 H24 M4 14 H24 M4 24 H24 M14 8 V20 M12 9 L14 7 L16 9 M12 19 L14 21 L16 19" /><circle cx="3" cy="4" r="2" /><circle cx="3" cy="14" r="2" /><circle cx="3" cy="24" r="2" /><circle cx="25" cy="14" r="2" /></ToolIcon>
                <ToolBtn><FaArrowLeft size={17} /></ToolBtn>
                <ToolChevron>
                  <svg width="22" height="14" viewBox="0 0 22 14" fill="none" stroke="#4e4e4e" strokeWidth="1.4"><path d="M2 1 L11 12 L20 1" /></svg>
                </ToolChevron>
              </ToolCol>
              <GhostBody>
                <GhostToolbar>D</GhostToolbar>
                <GhostPlot width="478" height="248" viewBox="77 620 478 248" fontFamily="'Liberation Sans', Arial, sans-serif">
                  <rect x="77" y="620" width="478" height="80" fill="#231f10" />
                  <rect x="77" y="700" width="478" height="45" fill="#26232c" />
                  <rect x="77" y="745" width="478" height="12" fill="#10222e" />
                  <rect x="77" y="757" width="478" height="49" fill="#1e1e1e" />
                  <rect x="77" y="806" width="478" height="62" fill="#181818" />
                  <path d="M77 633 L100 650 M90 620 C82 640 92 650 102 645 M77 655 H102" stroke="#6a5a30" fill="none" />
                  <line x1="77" x2="102" y1="660" y2="660" stroke="#4c7a20" />
                  <rect x="86" y="682" width="5" height="16" fill="#6c8a2a" />
                  <path d="M77 688 L102 694" stroke="#7a1d1d" strokeWidth="1.5" />
                  <path d="M77 706 L90 700 L102 696" stroke="#8a2a9a" strokeWidth="2" fill="none" />
                  <rect x="80" y="708" width="3" height="8" fill="#a83030" />
                  <line x1="77" x2="102" y1="762" y2="762" stroke="#8a5a1a" />
                  <line x1="77" x2="102" y1="797" y2="797" stroke="#7a2a2a" strokeDasharray="3 3" />
                  <rect x="79" y="811" width="6" height="12" fill="#5e2a40" />
                  <rect x="86" y="803" width="7" height="20" fill="#5a6e30" />
                  <rect x="93" y="811" width="6" height="12" fill="#5a6e30" />
                  <line x1="77" x2="102" y1="851" y2="851" stroke="#3a7a20" />
                  <line x1="77" x2="102" y1="860" y2="860" stroke="#8a5a1a" />
                  <rect x="82.5" y="632.5" width="12" height="13" fill="none" stroke="#666" />
                  <line x1="85" x2="92" y1="639" y2="639" stroke="#666" />
                  <text x="82" y="664" fontSize="12" fill="#666">O</text>
                  <text x="82" y="684" fontSize="12" fill="#6a6a6a">EM</text>
                  <text x="82" y="705" fontSize="12" fill="#6a6a6a">EM</text>
                  <text x="82" y="725" fontSize="12" fill="#6a6a6a">BB</text>
                  <text x="82" y="746" fontSize="12" fill="#6a6a6a">Volt</text>
                  <text x="82" y="843" fontSize="12" fill="#555">RSI</text>
                </GhostPlot>
                <GhostAxis>
                  <AxisTick $x={46}>16</AxisTick><AxisTick $x={121}>Apr</AxisTick><AxisTick $x={244}>May</AxisTick><AxisTick $x={331}>17</AxisTick><AxisTick $x={398}>Jun</AxisTick>
                </GhostAxis>
                <GhostRange>
                  <GhostRangeBtn>1d</GhostRangeBtn>
                  <GhostRangeBtn>5d</GhostRangeBtn><GhostRangeBtn>1m</GhostRangeBtn><GhostRangeBtn>6m</GhostRangeBtn>
                  <GhostRangeBtn>1y</GhostRangeBtn><GhostRangeBtn>5y</GhostRangeBtn><GhostRangeBtn $last>All</GhostRangeBtn>
                </GhostRange>
              </GhostBody>
            </GhostFrame>
            <GripMark r={3} b={3} />
          </LowerLeft>
        </LeftCol>

        <MidCol>
          <PanelTitle><Dot />Course of Sales (VM...</PanelTitle>
        </MidCol>

        <RightCol>
          {Depths.map(d => (
            <Depth key={d.title}>
              <PanelTitle $pl={5}><Dot />{d.title}</PanelTitle>
              <QuoteRow>
                <QuoteBlock $c={d.c} $ox={d.ox}><strong>{d.price}</strong><span>{d.chg}</span></QuoteBlock>
                <QuoteSide><span>{d.side[0]}</span><span>{d.side[1]}</span></QuoteSide>
              </QuoteRow>
              <AskHead><span /><span /><span>Ask</span></AskHead>
              {d.rows.map((r, i) => (
                <Row key={r[0]} $odd={i % 2 === 0}>
                  <span>{i === 10 ? '-' : ''}</span><span>{i === 10 ? '-' : ''}</span><span>{r[0]}</span><span>{r[1]}</span>
                </Row>
              ))}
              <TotalRow><span>{d.total[0]}</span><span>{d.total[1]}</span></TotalRow>
              <Thumb $h={d.thumb} />
              <GripMark r={0} b={3} />
            </Depth>
          ))}
        </RightCol>
      </Workspace>

      <Footer>
        <FootLeft>
          Market Data provided by
          <IressMark width="20" height="22" viewBox="0 0 20 22" fill="none" stroke="#27d39a" strokeWidth="1.8"><path d="M12 2 L2 13 L16 20 Z" /></IressMark>
          <Iress>iress</Iress>
        </FootLeft>
        <FootRight>CommSec ViewPoint</FootRight>
      </Footer>

      <PageScroll />

      <ChartWindow>
        <WinHead>
          <WinDot />
          Chart (VMS.ASX)
          <WinClose><FaTimes size={15} /></WinClose>
        </WinHead>
        <SymbolRow>
          <SymbolInput>VMS.ASX</SymbolInput>
          <GhostBtn $w={64}>Add</GhostBtn>
          <GhostBtn $w={65} $ml={1}>Compare</GhostBtn>
          <Spacer />
          <GhostBtn $w={65} $mt={2}>Events<FaCaretDown size={11} /></GhostBtn>
          <AutoSave>AutoSave</AutoSave>
          <Toggle />
        </SymbolRow>
        <ChartFrame>
          <Toolbar>
            <Dee>D</Dee>
            <svg width="14" height="20" viewBox="0 0 14 20" fill="none" stroke="#ccc" strokeWidth="1"><rect x="1.5" y="6.5" width="4" height="12" /><line x1="3.5" x2="3.5" y1="3" y2="6" /><rect x="8.5" y="3.5" width="4" height="7" /><line x1="10.5" x2="10.5" y1="0" y2="3" /></svg>
            <GapBox $w={29} />
            <svg width="20" height="10" viewBox="0 0 20 10" fill="none" stroke="#bbb" strokeWidth="1"><path d="M0 9 C3 5 5 2 8 4 S12 8 14 6 S18 1 20 1" /></svg>
            <IndLabel>Indicators</IndLabel>
            <ToolbarTrade>
              <TradeBtn $bg="#22a23e">Buy</TradeBtn>
              <TradeBtn $bg="#cc2f2a">Sell</TradeBtn>
            </ToolbarTrade>
            <Spacer />
            <GearWrap><Settings size={21} strokeWidth={1} /></GearWrap>
            <GhostBtn $w={49} $h={26} $bc="#7c7c7c" $c="#a8a8a8">Save</GhostBtn>
            <GhostBtn $w={20} $h={26} $ml={2} $bc="#7c7c7c" $c="#a8a8a8"><FaCaretDown size={11} /></GhostBtn>
            <GhostBtn $w={62} $h={26} $ml={10} $bc="#7c7c7c" $c="#a8a8a8">Load<FaCaretDown size={11} /></GhostBtn>
            <GapBox $w={9} />
          </Toolbar>
          <PlotWrap>
            <ChartDrawing />
            <Legend>
              <LegendTitle>
                <MinusBox />
                <TitleName>Venture Minerals, 1D, ASX, Heikin Ashi</TitleName>
                <MiniIcons s={11} g={1} ml={0} mr={4} />
                <OHLC>O<i>4.19</i></OHLC><OHLC>H<i>4.30</i></OHLC><OHLC>L<i>4.00</i></OHLC><OHLC>C<i>4.20</i></OHLC>
              </LegendTitle>
              <LegendRow>BB (20, 2)<MiniIcons />
                <Val $c="#e00000" $w={400}>4.5844</Val><Val $c="#fff">5.5681</Val><Val $c="#fff">3.6007</Val>
              </LegendRow>
              <LegendRow>EMA (5, close, 0)<MiniIcons /><Val $c="#1fd8e8">4.2294</Val></LegendRow>
              <LegendRow>Volume (20)<MiniIcons /><Val $c="#84ad2a" $w={400}>2.968M</Val><Val $c="#8f8f8f" $w={400}>n/a</Val></LegendRow>
              <LegendRow>EMA (30, close, 0)<MiniIcons /><Val $c="#f0f000">4.7223</Val></LegendRow>
            </Legend>
            <Handle>›</Handle>
            <RsiLegend>RSI (14)<MiniIcons /><Val $c="#fff">37.0109</Val></RsiLegend>
            <HelpBadge><FaQuestionCircle size={34} /></HelpBadge>
          </PlotWrap>
          <RangeBar>
            <RangeBtn>1d</RangeBtn><RangeBtn>5d</RangeBtn><RangeBtn>1m</RangeBtn><RangeBtn>6m</RangeBtn><RangeBtn $pad="0 14px 0 13px">1y</RangeBtn><RangeBtn $pad="0 14px 0 13px">5y</RangeBtn><RangeBtn $last>All</RangeBtn>
          </RangeBar>
        </ChartFrame>
      </ChartWindow>
    </Page>
  );
}
